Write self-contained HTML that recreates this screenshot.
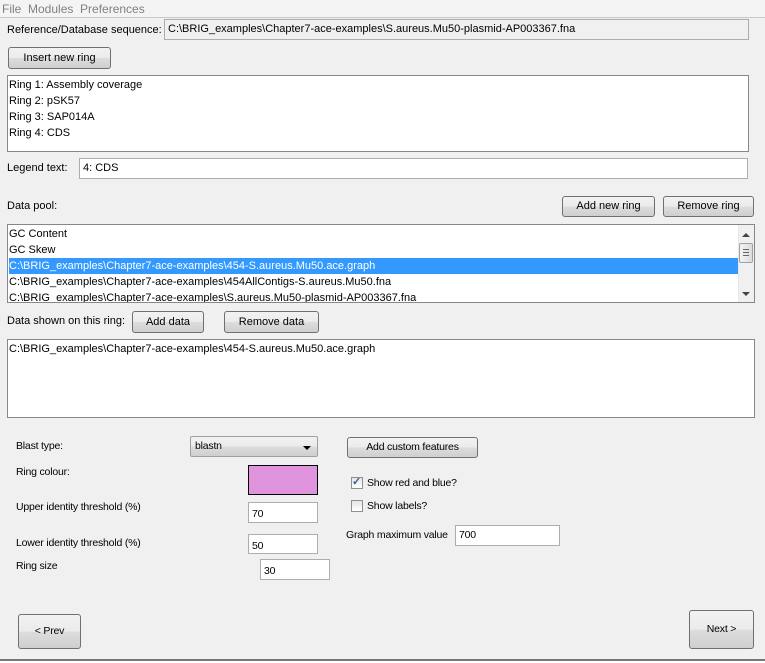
<!DOCTYPE html>
<html><head><style>
*{margin:0;padding:0;box-sizing:border-box}
body{width:765px;height:663px;background:#f0f0f0;font-family:"Liberation Sans",sans-serif;font-size:11px;color:#000;position:relative;overflow:hidden}
.a{position:absolute;white-space:nowrap}
.f{position:absolute;background:#fff;border:1px solid #abadb3}
.b{position:absolute;border:1px solid #707070;border-radius:3px;background:linear-gradient(#f2f2f2 0%,#ebebeb 50%,#dddddd 51%,#cfcfcf 100%);text-align:center}
.row{position:absolute;left:1px;height:16px;line-height:16px;padding-left:0px}
.s{font-size:10.5px;letter-spacing:-0.2px}
</style></head><body>
<div class="a" style="left:0;top:0;width:765px;height:18px;background:#f4f4f4;border-bottom:1px solid #c8c8c8"></div>
<div class="a" style="left:2px;top:2px;font-size:12px;color:#808080">File&nbsp;&nbsp;Modules&nbsp;&nbsp;Preferences</div>

<div class="a" style="left:7px;top:24px">Reference/Database sequence:</div>
<div class="f" style="left:164px;top:19px;width:585px;height:21px;background:#f0f0f0;padding:3px 0 0 3px">C:\BRIG_examples\Chapter7-ace-examples\S.aureus.Mu50-plasmid-AP003367.fna</div>

<div class="b" style="left:8px;top:47px;width:103px;height:22px;line-height:20px">Insert new ring</div>

<div class="f" style="left:7px;top:75px;width:742px;height:77px;border-color:#828790">
<div class="row" style="top:1px">Ring 1: Assembly coverage</div>
<div class="row" style="top:17px">Ring 2: pSK57</div>
<div class="row" style="top:33px">Ring 3: SAP014A</div>
<div class="row" style="top:49px">Ring 4: CDS</div>
</div>

<div class="a" style="left:7px;top:162px">Legend text:</div>
<div class="f" style="left:79px;top:158px;width:669px;height:21px;padding:3px 0 0 3px">4: CDS</div>

<div class="a" style="left:7px;top:200px">Data pool:</div>
<div class="b" style="left:562px;top:196px;width:93px;height:21px;line-height:19px">Add new ring</div>
<div class="b" style="left:663px;top:196px;width:91px;height:21px;line-height:19px">Remove ring</div>

<div class="f" style="left:7px;top:224px;width:748px;height:79px;border-color:#828790;overflow:hidden">
<div class="row" style="top:1px">GC Content</div>
<div class="row" style="top:17px">GC Skew</div>
<div class="row" style="top:33px;width:729px;background:#3399ff;color:#fff">C:\BRIG_examples\Chapter7-ace-examples\454-S.aureus.Mu50.ace.graph</div>
<div class="row" style="top:49px">C:\BRIG_examples\Chapter7-ace-examples\454AllContigs-S.aureus.Mu50.fna</div>
<div class="row" style="top:65px">C:\BRIG_examples\Chapter7-ace-examples\S.aureus.Mu50-plasmid-AP003367.fna</div>
<div style="position:absolute;left:730px;top:0;width:17px;height:77px;background:#f0f0f0;border-left:1px solid #e8e8e8"></div>
<div style="position:absolute;left:731px;top:18px;width:14px;height:20px;border:1px solid #a0a0a0;border-radius:2px;background:linear-gradient(90deg,#f4f4f4,#dcdcdc)"></div>
<div class="a" style="left:735px;top:24px;width:6px;height:7px;border-top:1px solid #666;border-bottom:1px solid #666"></div>
<div class="a" style="left:735px;top:27px;width:6px;height:1px;background:#666"></div>
<div class="a" style="left:734px;top:8px;width:0;height:0;border-left:4px solid transparent;border-right:4px solid transparent;border-bottom:4px solid #444"></div>
<div class="a" style="left:734px;top:67px;width:0;height:0;border-left:4px solid transparent;border-right:4px solid transparent;border-top:4px solid #444"></div>
</div>

<div class="a" style="left:7px;top:315px">Data shown on this ring:</div>
<div class="b" style="left:132px;top:311px;width:72px;height:22px;line-height:20px">Add data</div>
<div class="b" style="left:224px;top:311px;width:95px;height:22px;line-height:20px">Remove data</div>

<div class="f" style="left:7px;top:339px;width:748px;height:79px;border-color:#828790">
<div class="row" style="top:1px">C:\BRIG_examples\Chapter7-ace-examples\454-S.aureus.Mu50.ace.graph</div>
</div>

<div class="a s" style="left:16px;top:440px">Blast type:</div>
<div class="b s" style="left:190px;top:436px;width:128px;height:21px;border-radius:2px;text-align:left;padding:3px 0 0 4px;border-color:#a0a0a0">blastn</div>
<div class="a" style="left:303px;top:446px;width:0;height:0;border-left:4px solid transparent;border-right:4px solid transparent;border-top:4px solid #000"></div>
<div class="b s" style="left:347px;top:437px;width:131px;height:21px;line-height:19px">Add custom features</div>

<div class="a s" style="left:16px;top:466px">Ring colour:</div>
<div class="a" style="left:248px;top:465px;width:70px;height:30px;background:#df94dd;border:1px solid #000"></div>

<div class="a" style="left:351px;top:477px;width:12px;height:12px;border:1px solid #8e8f8f;background:linear-gradient(#e6e6e6,#fff)"></div>
<div class="a" style="left:352px;top:475px;font-size:11px;color:#3c5a9a;font-weight:bold">✓</div>
<div class="a s" style="left:367px;top:477px">Show red and blue?</div>
<div class="a" style="left:351px;top:500px;width:12px;height:12px;border:1px solid #8e8f8f;background:linear-gradient(#e6e6e6,#fff)"></div>
<div class="a s" style="left:367px;top:500px">Show labels?</div>

<div class="a s" style="left:16px;top:501px">Upper identity threshold (%)</div>
<div class="f s" style="left:248px;top:502px;width:70px;height:21px;padding:5px 0 0 3px">70</div>
<div class="a s" style="left:16px;top:537px">Lower identity threshold (%)</div>
<div class="f s" style="left:248px;top:534px;width:70px;height:20px;padding:5px 0 0 3px">50</div>
<div class="a s" style="left:16px;top:560px">Ring size</div>
<div class="f s" style="left:260px;top:559px;width:70px;height:21px;padding:5px 0 0 3px">30</div>

<div class="a s" style="left:346px;top:529px">Graph maximum value</div>
<div class="f s" style="left:455px;top:525px;width:105px;height:21px;padding:3px 0 0 3px">700</div>

<div class="b s" style="left:18px;top:614px;width:63px;height:35px;line-height:33px">&lt; Prev</div>
<div class="b s" style="left:689px;top:610px;width:65px;height:39px;line-height:37px">Next &gt;</div>

<div class="a" style="left:0;top:659px;width:765px;height:2px;background:#777"></div>
<div class="a" style="left:0;top:661px;width:765px;height:2px;background:#fff"></div>
</body></html>
